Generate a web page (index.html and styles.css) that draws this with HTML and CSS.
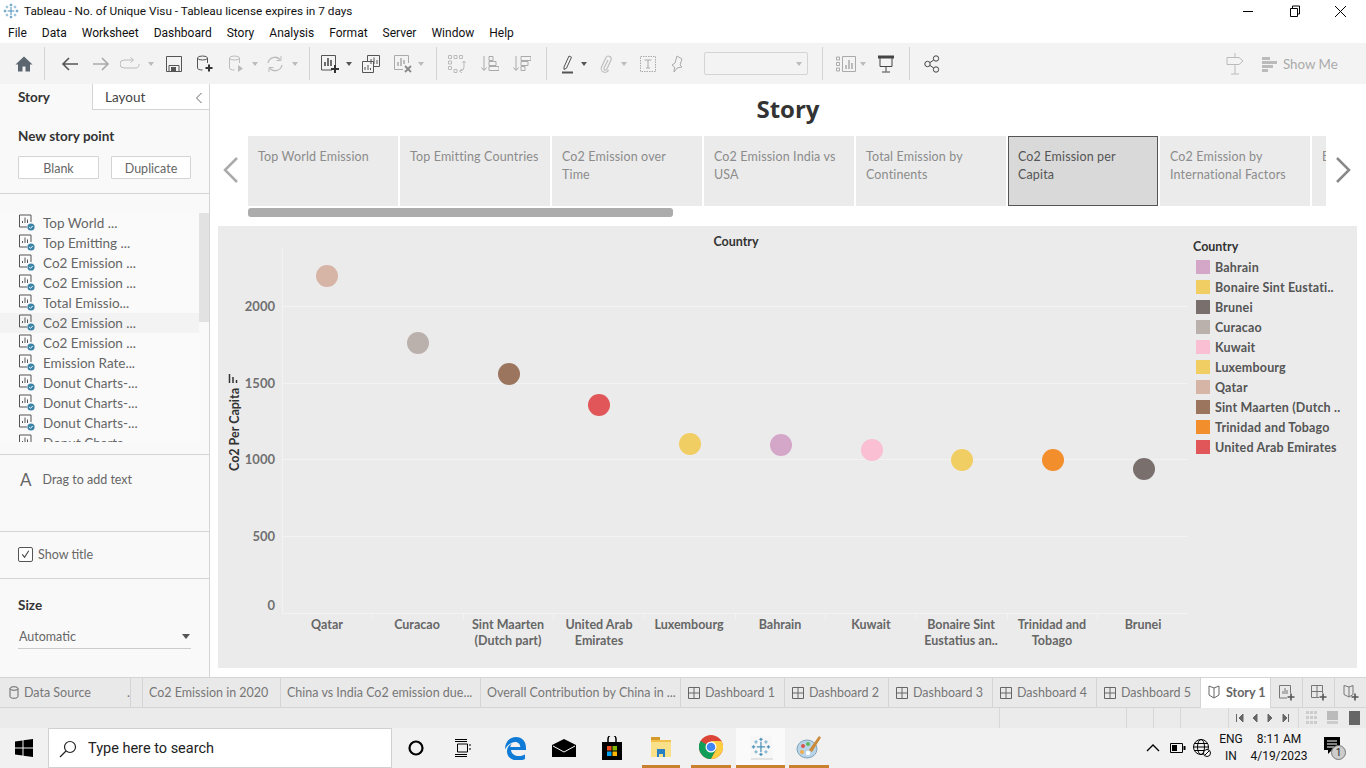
FILE: index.html
```html
<!DOCTYPE html>
<html lang="en">
<head>
  <meta charset="UTF-8">
  <title>Tableau - No. of Unique Visu - Tableau license expires in 7 days</title>
  <link rel="stylesheet" href="styles.css">
</head>
<body>

<svg class="defs" width="0" height="0">
  <symbol id="i-point" viewBox="0 0 18 18">
    <path d="M13 1H1.500v12H9" fill="none" stroke="#555" stroke-width="1"/>
    <path d="M13 1v7" fill="none" stroke="#555"/>
    <path d="M4.500 9V7M7 9V3.500M9.500 9V5.500" stroke="#555" stroke-width="1" fill="none"/>
    <circle cx="13" cy="13" r="3.600" fill="#3b84a8"/>
    <path d="M11.200 13l1.300 1.300 2.200-2.300" stroke="#fff" stroke-width="1" fill="none"/>
  </symbol>
  <symbol id="i-dash" viewBox="0 0 12 12">
    <path d="M.5.5h11v11H.5zM6 .5v11M.5 6h11" fill="none" stroke="#666"/>
  </symbol>
  <symbol id="i-snow" viewBox="0 0 24 24">
    <g fill="none" stroke="#4a90b8" stroke-width="1.500">
      <path d="M12 6v12M7 12h10"/>
      <path d="M12 1v4M10 3h4M12 19v4M10 21h4M1 12h4M3 10v4M19 12h4M21 10v4"/>
      <path d="M6 4v4M4 6h4M18 4v4M16 6h4M6 16v4M4 18h4M18 16v4M16 18h4" stroke="#7fb2cf"/>
    </g>
  </symbol>
</svg>

<div class="app">

  <div class="titlebar">
    <svg class="title-logo" width="16" height="16"><use href="#i-snow"/></svg>
    <span class="title-text">Tableau - No. of Unique Visu - Tableau license expires in 7 days</span>
    <div class="win-btns">
      <svg width="46" height="20" viewBox="0 0 46 20"><path d="M18 10.500h10" stroke="#000"/></svg>
      <svg width="46" height="20" viewBox="0 0 46 20"><path d="M19.500 7.500h7v8h-7zM21.500 7.500v-2.500h7v8h-2" fill="none" stroke="#000"/></svg>
      <svg width="46" height="20" viewBox="0 0 46 20"><path d="M18 5l11 11M29 5L18 16" stroke="#000" fill="none"/></svg>
    </div>
  </div>

  <div class="menubar">
    <span>File</span><span>Data</span><span>Worksheet</span><span>Dashboard</span><span>Story</span><span>Analysis</span><span>Format</span><span>Server</span><span>Window</span><span>Help</span>
  </div>

  <div class="toolbar">
    <span class="tool ml12"><svg width="18" height="16" viewBox="0 0 18 16"><path d="M9 .5L.5 8.500H3V15.500h4.500V10.500h3V15.500H15V8.500h2.500z" fill="#5b6670"/></svg></span>
    <i class="tb-div ml8"></i>
    <span class="tool ml13"><svg width="18" height="16" viewBox="0 0 18 16"><path d="M17 8H2M8 2L2 8l6 6" fill="none" stroke="#555" stroke-width="1.600"/></svg></span>
    <span class="tool ml7"><svg width="18" height="16" viewBox="0 0 18 16"><path d="M1 8h15M10 2l6 6-6 6" fill="none" stroke="#aaa" stroke-width="1.600"/></svg></span>
    <span class="tool ml5"><svg width="20" height="14" viewBox="0 0 20 14"><path d="M13 3H4a3.500 3.500 0 0 0 0 8h12a3.500 3.500 0 0 0 3-4M10.500.5L13.500 3l-3 2.500" fill="none" stroke="#bbb"/></svg></span>
    <i class="caret ml6"></i>
    <span class="tool ml6"><svg width="16" height="16" viewBox="0 0 16 16"><path d="M.5.5h15v15H.5z" fill="none" stroke="#555"/><path d="M3 9.500h10v6H3z" fill="none" stroke="#555"/><path d="M5 11h5v4.500H5z" fill="#555"/></svg></span>
    <span class="tool ml7"><svg width="18" height="18" viewBox="0 0 18 18"><ellipse cx="6.500" cy="3" rx="5" ry="2" fill="none" stroke="#555"/><path d="M1.500 3v10c0 1 1.500 2 5 2M11.500 3v5" fill="none" stroke="#555"/><path d="M13 9.500v7M9.500 13h7" stroke="#333" stroke-width="2"/></svg></span>
    <span class="tool ml8"><svg width="18" height="18" viewBox="0 0 18 18"><ellipse cx="6.500" cy="3" rx="5" ry="2" fill="none" stroke="#bbb"/><path d="M1.500 3v10c0 1 1.500 2 5 2M11.500 3v5" fill="none" stroke="#bbb"/><path d="M10 10l5 3.500-5 3.500z" fill="#bbb"/></svg></span>
    <i class="caret ml3"></i>
    <span class="tool ml3"><svg width="18" height="18" viewBox="0 0 18 18"><path d="M2 8a7 7 0 0 1 12-3.500M16 10a7 7 0 0 1-12 3.500" fill="none" stroke="#bbb" stroke-width="1.300"/><path d="M15 1v4.500h-4.500M3 17v-4.500h4.500" fill="none" stroke="#bbb"/></svg></span>
    <i class="caret ml5"></i>
    <i class="tb-div ml9"></i>
    <span class="tool ml8"><svg width="20" height="20" viewBox="0 0 20 20"><path d="M12 16H1.500V1.500h14V11" fill="none" stroke="#555"/><path d="M5 12V8M8 12V4M11 12V6" stroke="#444" stroke-width="1.500"/><path d="M15 11v8M11 15h8" stroke="#333" stroke-width="2"/></svg></span>
    <i class="caret caret-dark ml4"></i>
    <span class="tool ml5"><svg width="18" height="18" viewBox="0 0 18 18"><path d="M5.500 6V.5h12v11H12" fill="none" stroke="#555"/><path d="M.5 6.500h11v11H.5z" fill="none" stroke="#555"/><path d="M9 9V4M12 9V2.500M15 9V5M3 15v-3M6 15v-5M8.500 15v-2" stroke="#555"/></svg></span>
    <span class="tool ml8"><svg width="20" height="20" viewBox="0 0 20 20"><path d="M10 15.500H1.500V1.500h14V9" fill="none" stroke="#aaa"/><path d="M5 12V8M8 12V4M11 10V6" stroke="#aaa" stroke-width="1.500"/><path d="M12 12l6 6M18 12l-6 6" stroke="#888" stroke-width="1.800"/></svg></span>
    <i class="caret ml3"></i>
    <i class="tb-div ml10"></i>
    <span class="tool ml8"><svg width="18" height="18" viewBox="0 0 18 18"><path d="M.5.500h3v3h-3zM6 .5h3v3H6zM11.500.5h3v3h-3zM.5 6h3v3h-3zM.5 11.500h3v3h-3zM6 14.500h3v3H6z" fill="none" stroke="#bbb"/><path d="M16 6v6a4 4 0 0 1-4 4M14 14l-2.500 2 2.500 2M14.500 8L16 6l1.500 2" fill="none" stroke="#bbb"/></svg></span>
    <span class="tool ml9"><svg width="18" height="18" viewBox="0 0 18 18"><path d="M3 1v14M.5 12.500L3 15.500l2.500-3" fill="none" stroke="#aaa"/><path d="M8 1.500h4v4H8zM8 6.500h7v4H8zM8 11.500h10v4H8z" fill="none" stroke="#aaa"/></svg></span>
    <span class="tool ml8"><svg width="18" height="18" viewBox="0 0 18 18"><path d="M3 1v14M.5 12.500L3 15.500l2.500-3" fill="none" stroke="#aaa"/><path d="M8 1.500h10v4H8zM8 6.500h7v4H8zM8 11.500h4v4H8z" fill="none" stroke="#aaa"/></svg></span>
    <i class="tb-div ml12"></i>
    <span class="tool ml9"><svg width="16" height="20" viewBox="0 0 16 20"><path d="M4 13L9 2l2.500 1.200-5 11-2.500 1.300z" fill="none" stroke="#555"/><path d="M2 18.500h11" stroke="#555" stroke-width="2"/></svg></span>
    <i class="caret caret-dark ml1"></i>
    <span class="tool ml5"><svg width="14" height="20" viewBox="0 0 14 20"><path d="M9 6L5 14a1.500 1.500 0 0 0 2.800 1.200L12 6a2.800 2.800 0 0 0-5-2.500L2.500 13a3.800 3.800 0 0 0 7 3" fill="none" stroke="#bbb" stroke-width="1.100"/></svg></span>
    <i class="caret ml3"></i>
    <span class="tool ml7"><svg width="16" height="16" viewBox="0 0 16 16"><path d="M.5.5h15v15H.5z" fill="none" stroke="#aaa" stroke-dasharray="1.500 1"/><path d="M4.500 4h7M8 4v8M6 12h4" fill="none" stroke="#aaa"/></svg></span>
    <span class="tool ml5"><svg width="14" height="18" viewBox="0 0 14 18"><path d="M7 1l5 3-2 6 2 2-5 1-3 4 .5-5L2 10l3-2z" fill="none" stroke="#aaa"/></svg></span>
    <span class="tb-select ml15"><i class="caret"></i></span>
    <i class="tb-div ml14"></i>
    <span class="tool ml11"><svg width="20" height="16" viewBox="0 0 20 16"><path d="M.5 1h3v3h-3zM.5 6.500h3v3h-3zM.5 12h3v3h-3z" fill="none" stroke="#aaa"/><path d="M6.500.5h13v15h-13z" fill="none" stroke="#aaa"/><path d="M10 13V9M13 13V4M16 13V7" stroke="#aaa" stroke-width="1.500"/></svg></span>
    <i class="caret ml2"></i>
    <span class="tool ml6"><svg width="18" height="18" viewBox="0 0 18 18"><path d="M1 2h16" stroke="#444" stroke-width="3"/><path d="M3 2.500v9h12v-9M9 11.500v5M5 17h8" fill="none" stroke="#444"/></svg></span>
    <i class="tb-div ml11"></i>
    <span class="tool ml10"><svg width="16" height="18" viewBox="0 0 16 18"><circle cx="12" cy="3.500" r="2.700" fill="none" stroke="#444"/><circle cx="12" cy="14.500" r="2.700" fill="none" stroke="#444"/><circle cx="3.500" cy="9" r="2.700" fill="none" stroke="#444"/><path d="M6 7.500l3.700-2.500M6 10.500l3.700 2.500" stroke="#444"/></svg></span>
    <span class="tb-spacer"></span>
    <span class="tool"><svg width="18" height="22" viewBox="0 0 18 22"><path d="M9 0v4M1 4.500h12l4 3.500-4 3.500H1zM9 11.500V21M5 21h8" fill="none" stroke="#bbb"/></svg></span>
    <span class="show-me"><svg width="16" height="16" viewBox="0 0 16 16"><path d="M0 1h8v3H0zM0 5h15v3H0zM0 9h11v3H0zM0 13h6v3H0z" fill="#bbb"/></svg>Show Me</span>
  </div>

  <div class="main">
    <aside class="side">
      <div class="side-tabs">
        <div class="side-tab side-tab-on">Story</div>
        <div class="side-tab">Layout</div>
        <div class="side-collapse"><svg width="8" height="12" viewBox="0 0 8 12"><path d="M6.500 1L1.500 6l5 5" fill="none" stroke="#666"/></svg></div>
      </div>
      <div class="new-point">
        <div class="side-head">New story point</div>
        <div class="new-btns"><button class="btn">Blank</button><button class="btn">Duplicate</button></div>
      </div>
      <div class="points">
        <div class="points-list">
          <div class="point"><svg width="18" height="18"><use href="#i-point"/></svg>Top World ...</div>
          <div class="point"><svg width="18" height="18"><use href="#i-point"/></svg>Top Emitting ...</div>
          <div class="point"><svg width="18" height="18"><use href="#i-point"/></svg>Co2 Emission ...</div>
          <div class="point"><svg width="18" height="18"><use href="#i-point"/></svg>Co2 Emission ...</div>
          <div class="point"><svg width="18" height="18"><use href="#i-point"/></svg>Total Emissio...</div>
          <div class="point point-on"><svg width="18" height="18"><use href="#i-point"/></svg>Co2 Emission ...</div>
          <div class="point"><svg width="18" height="18"><use href="#i-point"/></svg>Co2 Emission ...</div>
          <div class="point"><svg width="18" height="18"><use href="#i-point"/></svg>Emission Rate...</div>
          <div class="point"><svg width="18" height="18"><use href="#i-point"/></svg>Donut Charts-...</div>
          <div class="point"><svg width="18" height="18"><use href="#i-point"/></svg>Donut Charts-...</div>
          <div class="point"><svg width="18" height="18"><use href="#i-point"/></svg>Donut Charts-...</div>
          <div class="point"><svg width="18" height="18"><use href="#i-point"/></svg>Donut Charts-...</div>
        </div>
        <div class="points-scroll"><div class="points-thumb"></div></div>
      </div>
      <div class="drag-text"><span class="drag-a">A</span>Drag to add text</div>
      <div class="show-title"><span class="check"><svg width="14" height="14" viewBox="0 0 14 14"><path d="M3.500 7.500l2.500 3 4.500-7" fill="none" stroke="#444" stroke-width="1.200"/></svg></span>Show title</div>
      <div class="size-box">
        <div class="side-head">Size</div>
        <div class="size-select">Automatic<i class="caret caret-dark"></i></div>
      </div>
    </aside>

    <section class="story">
      <h1 class="story-title">Story</h1>
      <div class="nav-row">
        <svg class="nav-arrow" width="18" height="28" viewBox="0 0 18 28"><path d="M15 2L3 14l12 12" fill="none" stroke="#aaa" stroke-width="2.500"/></svg>
        <div class="cards-wrap">
          <div class="cards">
            <div class="card">Top World Emission</div>
            <div class="card">Top Emitting Countries</div>
            <div class="card">Co2 Emission over Time</div>
            <div class="card">Co2 Emission India vs USA</div>
            <div class="card">Total Emission by Continents</div>
            <div class="card card-on">Co2 Emission per Capita</div>
            <div class="card">Co2 Emission by International Factors</div>
            <div class="card">Emission Rate Year</div>
          </div>
          <div class="cards-scroll"></div>
        </div>
        <svg class="nav-arrow" width="18" height="28" viewBox="0 0 18 28"><path d="M3 2l12 12L3 26" fill="none" stroke="#888" stroke-width="2.500"/></svg>
      </div>
      <div class="sheet">
        <svg class="chart" width="975" height="442" viewBox="218 226 975 442">
          <text class="hdr" x="736" y="246" text-anchor="middle">Country</text>
          <path class="axis" d="M282.500 247V613"/>
          <path class="grid" d="M282 306.500H1188M282 383.500H1188M282 459.500H1188M282 536.500H1188M282 613.500H1188"/>
          <path class="grid" d="M372.500 613v6M463.500 613v6M553.500 613v6M644.500 613v6M735.500 613v6M825.500 613v6M916.500 613v6M1007.500 613v6M1097.500 613v6"/>
          <text class="tick" x="275" y="311" text-anchor="end">2000</text>
          <text class="tick" x="275" y="388" text-anchor="end">1500</text>
          <text class="tick" x="275" y="464" text-anchor="end">1000</text>
          <text class="tick" x="275" y="541" text-anchor="end">500</text>
          <text class="tick" x="275" y="610" text-anchor="end">0</text>
          <text class="hdr" transform="translate(239 471) rotate(-90)">Co2 Per Capita</text>
          <path d="M229.500 374v9M233 377v6M236.500 380v3" stroke="#333" stroke-width="1.500"/>
          <circle cx="327" cy="276" r="11" fill="#d7b5a6"/>
          <circle cx="418" cy="343" r="11" fill="#bab0ac"/>
          <circle cx="509" cy="374" r="11" fill="#9c755f"/>
          <circle cx="599" cy="405" r="11" fill="#e15759"/>
          <circle cx="690" cy="444" r="11" fill="#f1ce63"/>
          <circle cx="781" cy="445" r="11" fill="#d4a6c8"/>
          <circle cx="872" cy="450" r="11" fill="#fabfd2"/>
          <circle cx="962" cy="460" r="11" fill="#f1ce63"/>
          <circle cx="1053" cy="460" r="11" fill="#f28e2b"/>
          <circle cx="1144" cy="469" r="11" fill="#79706e"/>
          <g class="xlab" text-anchor="middle">
            <text x="327" y="629">Qatar</text>
            <text x="417" y="629">Curacao</text>
            <text x="508" y="629">Sint Maarten</text><text x="508" y="645">(Dutch part)</text>
            <text x="599" y="629">United Arab</text><text x="599" y="645">Emirates</text>
            <text x="689" y="629">Luxembourg</text>
            <text x="780" y="629">Bahrain</text>
            <text x="871" y="629">Kuwait</text>
            <text x="961" y="629">Bonaire Sint</text><text x="961" y="645">Eustatius an..</text>
            <text x="1052" y="629">Trinidad and</text><text x="1052" y="645">Tobago</text>
            <text x="1143" y="629">Brunei</text>
          </g>
        </svg>
        <div class="legend">
          <div class="legend-title">Country</div>
          <div class="legend-row"><i class="swatch c-bahrain"></i>Bahrain</div>
          <div class="legend-row"><i class="swatch c-yellow"></i>Bonaire Sint Eustati..</div>
          <div class="legend-row"><i class="swatch c-brunei"></i>Brunei</div>
          <div class="legend-row"><i class="swatch c-curacao"></i>Curacao</div>
          <div class="legend-row"><i class="swatch c-kuwait"></i>Kuwait</div>
          <div class="legend-row"><i class="swatch c-yellow"></i>Luxembourg</div>
          <div class="legend-row"><i class="swatch c-qatar"></i>Qatar</div>
          <div class="legend-row"><i class="swatch c-sint"></i>Sint Maarten (Dutch ..</div>
          <div class="legend-row"><i class="swatch c-trinidad"></i>Trinidad and Tobago</div>
          <div class="legend-row"><i class="swatch c-uae"></i>United Arab Emirates</div>
        </div>
      </div>
    </section>
  </div>

  <div class="tabs">
    <div class="tab tab-ds"><svg width="10" height="13" viewBox="0 0 10 13"><ellipse cx="5" cy="2.500" rx="4" ry="1.800" fill="none" stroke="#666"/><path d="M1 2.500v8c0 1 1.500 1.800 4 1.800s4-.8 4-1.800v-8" fill="none" stroke="#666"/></svg>Data Source<span class="tab-dot">.</span></div>
    <div class="tab tab-gap"></div>
    <div class="tab tab-co2">Co2 Emission in 2020</div>
    <div class="tab tab-wide">China vs India Co2 emission due...</div>
    <div class="tab tab-wide">Overall Contribution by China in ...</div>
    <div class="tab tab-dash"><svg width="12" height="12"><use href="#i-dash"/></svg>Dashboard 1</div>
    <div class="tab tab-dash"><svg width="12" height="12"><use href="#i-dash"/></svg>Dashboard 2</div>
    <div class="tab tab-dash"><svg width="12" height="12"><use href="#i-dash"/></svg>Dashboard 3</div>
    <div class="tab tab-dash"><svg width="12" height="12"><use href="#i-dash"/></svg>Dashboard 4</div>
    <div class="tab tab-dash"><svg width="12" height="12"><use href="#i-dash"/></svg>Dashboard 5</div>
    <div class="tab tab-story"><svg width="14" height="14" viewBox="0 0 14 14"><path d="M7 3L2 1v9l5 3 5-3V1zM7 3v10" fill="none" stroke="#666"/></svg>Story 1</div>
    <div class="tab tab-add"><svg width="16" height="16" viewBox="0 0 16 16"><path d="M8 13H.5V.5h11V8" fill="none" stroke="#777"/><path d="M4 9V6M6 9V3M8 9V5" stroke="#777"/><path d="M12 8.500v7M8.500 12h7" stroke="#555" stroke-width="1.600"/></svg></div>
    <div class="tab tab-add"><svg width="16" height="16" viewBox="0 0 16 16"><path d="M8 12.500H.5V.5h11V8M6 .5v12M.5 6.500h11" fill="none" stroke="#777"/><path d="M12 8.500v7M8.500 12h7" stroke="#555" stroke-width="1.600"/></svg></div>
    <div class="tab tab-add"><svg width="16" height="16" viewBox="0 0 16 16"><path d="M6 2L1 .5v9L6 12l4-2.500V.5zM6 2v10" fill="none" stroke="#777"/><path d="M12 8.500v7M8.500 12h7" stroke="#555" stroke-width="1.600"/></svg></div>
  </div>

  <div class="statusbar">
    <i class="st-cell st-a"></i><i class="st-cell st-b"></i><i class="st-cell st-b"></i><i class="st-cell st-c"></i>
    <div class="st-nav">
      <svg width="62" height="10" viewBox="0 0 62 10"><path d="M1.500 1v8M8 1L4 5l4 4zM22 1l-4 4 4 4zM33 1l4 4-4 4zM48 1l4 4-4 4zM53.500 1v8" fill="#666" stroke="#666" stroke-width="1"/></svg>
    </div>
    <div class="st-views">
      <svg width="66" height="14" viewBox="0 0 66 14"><path d="M4 0h3v3H4zM8 0h3v3H8zM12 0h3v3h-3zM4 5h3v3H4zM8 5h3v3H8zM12 5h3v3h-3zM4 10h3v3H4zM8 10h3v3H8zM12 10h3v3h-3z" fill="#ccc"/><path d="M25 0h11v9H25z" fill="#bbb"/><path d="M25 10h11v3H25z" fill="#ccc"/><path d="M47 0h11v14H47z" fill="#666"/></svg>
    </div>
  </div>

  <div class="taskbar">
    <span class="tk tk-win"><svg width="18" height="18" viewBox="0 0 18 18"><path d="M0 2.500l7.500-1v7H0zM8.500 1.300L18 0v8.500H8.500zM0 9.500h7.500v7L0 15.500zM8.500 9.500H18V18l-9.500-1.300z" fill="#000"/></svg></span>
    <div class="search"><svg width="18" height="18" viewBox="0 0 18 18"><circle cx="11" cy="7" r="5.500" fill="none" stroke="#222" stroke-width="1.200"/><path d="M7 11l-6 6" stroke="#222" stroke-width="1.200"/></svg>Type here to search</div>
    <span class="tk tk-cortana"><svg width="16" height="16" viewBox="0 0 16 16"><circle cx="8" cy="8" r="6.500" fill="none" stroke="#000" stroke-width="2.200"/></svg></span>
    <span class="tk tk-view"><svg width="18" height="18" viewBox="0 0 18 18"><path d="M3.500 5h10v8h-10zM1 2.500h12M1 15.500h12M1 .5h12M1 17.500h12M16 5v2M16 9v2" fill="none" stroke="#000"/></svg></span>
    <span class="tk tk-edge"><svg width="24" height="24" viewBox="0 0 24 24"><path d="M2 13C2 6 7 1 13 1c6 0 10 4 10 11v2H8c.5 4 4 6 8 6 2.500 0 4.500-.7 6-1.500v4.500c-2 1-4 1.500-7 1.500-7 0-11-4-11-9 0-4 2-6.500 5-8-1 1-1.500 2-1.700 3.500h10c0-2.500-2-5-5-5-4 0-8 3-10 7z" fill="#0f7bd6"/></svg></span>
    <span class="tk tk-mail"><svg width="24" height="18" viewBox="0 0 24 18"><path d="M0 6L12 0l12 6v12H0z" fill="#000"/><path d="M1 7l11 6 11-6" fill="none" stroke="#fff"/></svg></span>
    <span class="tk tk-store"><svg width="22" height="24" viewBox="0 0 22 24"><path d="M1 6h20v18H1z" fill="#000"/><path d="M7 6V3a4 4 0 0 1 8 0v3" fill="none" stroke="#000" stroke-width="1.500"/><path d="M6 10h4.500v4.500H6z" fill="#f25022"/><path d="M11.500 10H16v4.500h-4.500z" fill="#7fba00"/><path d="M6 15.500h4.500V20H6z" fill="#00a4ef"/><path d="M11.500 15.500H16V20h-4.500z" fill="#ffb900"/></svg></span>
    <span class="tk tk-files tk-open"><svg width="22" height="22" viewBox="0 0 22 22"><path d="M1 1h9v3h11v17H1z" fill="#f3c04b"/><path d="M1 1h9v3H1z" fill="#d49a2a"/><path d="M1 6h20v15H1z" fill="#fbe08a"/><path d="M7 13h8v8h-2v-3H9v3H7z" fill="#2a7fc4"/></svg></span>
    <span class="tk tk-chrome tk-open"><svg width="24" height="24" viewBox="0 0 24 24"><circle cx="12" cy="12" r="12" fill="#db4437"/><path d="M12 12L1.600 6A12 12 0 0 0 12 24l5.500-10z" fill="#0f9d58"/><path d="M12 6h10.400A12 12 0 0 1 12 24l5.500-10z" fill="#ffcd40"/><circle cx="12" cy="12" r="5.500" fill="#fff"/><circle cx="12" cy="12" r="4.300" fill="#4285f4"/></svg></span>
    <span class="tk tk-tableau tk-open"><svg width="26" height="26" viewBox="0 0 26 26"><path d="M2 2h22l1 23H3z" fill="#f7f7f7"/><path d="M25 25H3" stroke="#ccc"/><g transform="translate(3 3) scale(.83)"><use href="#i-snow" width="24" height="24"/></g></svg></span>
    <span class="tk tk-paint tk-open"><svg width="26" height="26" viewBox="0 0 26 26"><ellipse cx="11" cy="15" rx="10" ry="9" fill="#b9d4e6" stroke="#7fa4bd"/><circle cx="7" cy="12" r="2" fill="#d9534f"/><circle cx="12" cy="10" r="2" fill="#5cb85c"/><circle cx="6" cy="18" r="2" fill="#f0ad4e"/><circle cx="12" cy="19" r="2.200" fill="#fff"/><path d="M13 16L23 2l2 1.500L16 18z" fill="#c98a3a"/></svg></span>
    <span class="tb-spacer"></span>
    <span class="tray tray-up"><svg width="14" height="8" viewBox="0 0 14 8"><path d="M1 7l6-6 6 6" fill="none" stroke="#000" stroke-width="1.300"/></svg></span>
    <span class="tray tray-bat"><svg width="16" height="10" viewBox="0 0 16 10"><path d="M.5.500h12v9H.5z" fill="none" stroke="#000"/><path d="M2 2h5v6H2z" fill="#000"/><path d="M13.500 3h2v4h-2z" fill="#000"/></svg></span>
    <span class="tray tray-net"><svg width="18" height="18" viewBox="0 0 18 18"><circle cx="8" cy="8" r="7.500" fill="none" stroke="#000"/><ellipse cx="8" cy="8" rx="3.500" ry="7.500" fill="none" stroke="#000"/><path d="M.5 8h15M1.500 4.500h13M1.500 11.500h13" stroke="#000"/><circle cx="14" cy="14" r="3.500" fill="#fff" stroke="#000"/><path d="M12 16l4-4" stroke="#000"/></svg></span>
    <span class="lang"><span>ENG</span><span>IN</span></span>
    <span class="clock"><span>8:11 AM</span><span>4/19/2023</span></span>
    <span class="notif"><svg width="18" height="18" viewBox="0 0 18 18"><path d="M1 1h16v13H9l-4 4v-4H1z" fill="#000"/><path d="M4 5h10M4 8h10M4 11h7" stroke="#fff"/></svg><span class="notif-badge">1</span></span>
  </div>

</div>

</body>
</html>
```

FILE: styles.css
```css
html, body {
  margin: 0;
  padding: 0;
}
body {
  font-family: Lato, "Open Sans", sans-serif;
  color: #555;
  background: #fff;
}
i {
  display: block;
}
.defs {
  position: absolute;
}
.app {
  width: 1366px;
  height: 768px;
  display: flex;
  flex-direction: column;
  overflow: hidden;
}

/* window chrome */
.titlebar {
  height: 22px;
  display: flex;
  align-items: center;
  padding-left: 3px;
  font-family: Roboto, sans-serif;
  font-size: 11.800px;
  color: #111;
}
.title-logo {
  margin-right: 5px;
}
.win-btns {
  margin-left: auto;
  display: flex;
  padding-right: 3px;
}
.menubar {
  height: 21px;
  display: flex;
  align-items: center;
  gap: 15px;
  padding-left: 8px;
  font-family: Roboto, sans-serif;
  font-size: 12px;
  color: #111;
}

/* toolbar */
.toolbar {
  height: 41px;
  background: #f3f3f3;
  display: flex;
  align-items: center;
}
.tool {
  width: 24px;
  height: 24px;
  flex: none;
  display: flex;
  align-items: center;
  justify-content: center;
}
.tb-div {
  width: 1px;
  height: 33px;
  background: #d4d4d4;
  flex: none;
}
.caret {
  width: 0;
  height: 0;
  box-sizing: content-box;
  border: 3px solid transparent;
  border-top: 4px solid #bbb;
  border-bottom: 0;
  margin-right: 2px;
  flex: none;
}
.caret-dark {
  border-top-color: #555;
}
.tb-select {
  width: 104px;
  height: 23px;
  box-sizing: border-box;
  border: 1px solid #d4d4d4;
  border-radius: 2px;
  display: flex;
  align-items: center;
  justify-content: flex-end;
  padding-right: 3px;
  flex: none;
}
.tb-spacer {
  flex: 1;
}
.show-me {
  display: flex;
  align-items: center;
  gap: 5px;
  width: 92px;
  margin-left: 15px;
  margin-right: 12px;
  font-size: 13.300px;
  color: #aaa;
}
.ml1 { margin-left: 1px; }
.ml2 { margin-left: 2px; }
.ml3 { margin-left: 3px; }
.ml4 { margin-left: 4px; }
.ml5 { margin-left: 5px; }
.ml6 { margin-left: 6px; }
.ml7 { margin-left: 7px; }
.ml8 { margin-left: 8px; }
.ml9 { margin-left: 9px; }
.ml10 { margin-left: 10px; }
.ml11 { margin-left: 11px; }
.ml12 { margin-left: 12px; }
.ml13 { margin-left: 13px; }
.ml14 { margin-left: 14px; }
.ml15 { margin-left: 15px; }

/* main */
.main {
  height: 593px;
  display: flex;
}
.side {
  width: 210px;
  flex: none;
  box-sizing: border-box;
  background: #f9f9f9;
  border-right: 1px solid #d4d4d4;
  display: flex;
  flex-direction: column;
}
.side-tabs {
  height: 26px;
  display: flex;
  flex: none;
}
.side-tab {
  width: 92px;
  box-sizing: border-box;
  padding-left: 18px;
  line-height: 26px;
  font-size: 13.500px;
  color: #444;
  border-left: 1px solid #d4d4d4;
  border-bottom: 1px solid #d4d4d4;
  background: #fff;
}
.side-tab:nth-child(2) {
  width: 117px;
  padding-left: 12px;
}
.side-tab-on {
  border: 0;
  background: #f9f9f9;
  font-weight: 700;
  color: #333;
}
.side-collapse {
  position: absolute;
  left: 195px;
  top: 88px;
}
.side-head {
  font-size: 13.500px;
  font-weight: 700;
  color: #333;
}
.new-point {
  height: 84px;
  box-sizing: border-box;
  padding: 18px 18px 0;
  border-bottom: 1px solid #d4d4d4;
  flex: none;
}
.new-btns {
  display: flex;
  gap: 12px;
  margin-top: 12px;
}
.btn {
  width: 81px;
  height: 23px;
  padding: 1px 0 0;
  border: 1px solid #d4d4d4;
  border-radius: 1px;
  background: #fff;
  font-family: inherit;
  font-size: 12.500px;
  color: #666;
}
.btn + .btn {
  width: 80px;
}
.points {
  height: 261px;
  box-sizing: border-box;
  padding-top: 19px;
  border-bottom: 1px solid #d4d4d4;
  flex: none;
  display: flex;
}
.points-list {
  width: 199px;
  height: 229px;
  overflow: hidden;
  background: #fafafa;
}
.point {
  height: 20px;
  display: flex;
  align-items: center;
  gap: 7px;
  padding-left: 18px;
  font-size: 13.500px;
  color: #666;
}
.point-on {
  background: #f3f3f3;
}
.points-scroll {
  width: 10px;
  height: 229px;
}
.points-thumb {
  height: 109px;
  background: #e2e2e2;
}
.drag-text {
  height: 77px;
  box-sizing: border-box;
  padding: 16px 0 0 20px;
  border-bottom: 1px solid #d4d4d4;
  display: flex;
  align-items: flex-start;
  gap: 11px;
  font-size: 12.500px;
  line-height: 18px;
  color: #666;
  flex: none;
}
.drag-a {
  font-size: 17px;
  color: #666;
}
.show-title {
  height: 47px;
  box-sizing: border-box;
  border-bottom: 1px solid #d4d4d4;
  padding: 0 0 2px 18px;
  display: flex;
  align-items: center;
  gap: 5px;
  font-size: 12.500px;
  color: #666;
  flex: none;
}
.check {
  width: 15px;
  height: 15px;
  box-sizing: border-box;
  border: 1px solid #555;
  border-radius: 2px;
  background: #fff;
  display: flex;
  align-items: center;
  justify-content: center;
}
.size-box {
  padding: 18px 18px 0;
}
.size-select {
  margin-top: 11px;
  height: 25px;
  box-sizing: border-box;
  border-bottom: 1px solid #ccc;
  padding: 0 1px;
  display: flex;
  align-items: center;
  justify-content: space-between;
  font-size: 12.500px;
  color: #666;
}
.size-select .caret {
  border-width: 5px 4px 0;
  margin-right: 0;
}

/* story */
.story {
  flex: 1;
  min-width: 0;
  display: flex;
  flex-direction: column;
}
.story-title {
  margin: 0;
  height: 52px;
  line-height: 50px;
  text-align: center;
  font-size: 24px;
  font-weight: 700;
  color: #333;
  font-family: "Open Sans", sans-serif;
}
.nav-row {
  height: 90px;
  display: flex;
  align-items: flex-start;
  flex: none;
}
.nav-arrow {
  flex: none;
  margin: 20px 12px 0;
}
.cards-wrap {
  width: 1078px;
  flex: none;
  overflow: hidden;
  margin-left: -4px;
  margin-right: -4px;
}
.cards {
  display: flex;
  gap: 2px;
  width: 1400px;
}
.card {
  width: 150px;
  height: 70px;
  box-sizing: border-box;
  flex: none;
  background: #ebebeb;
  padding: 12px 10px 0;
  font-size: 12.500px;
  line-height: 18px;
  letter-spacing: .15px;
  color: #8c8c8c;
}
.card-on {
  background: #d9d9d9;
  border: 1px solid #555;
  padding: 11px 9px 0;
  color: #555;
}
.cards-scroll {
  width: 425px;
  height: 9px;
  margin-top: 2px;
  border-radius: 3px;
  background: #acacac;
}
.sheet {
  margin-left: 8px;
  width: 1139px;
  height: 442px;
  background: #ebebeb;
  display: flex;
  flex: none;
}
.chart {
  flex: none;
  display: block;
}
.chart .hdr {
  font-size: 12.500px;
  font-weight: 700;
  fill: #333;
}
.chart .axis {
  stroke: #f3f3f3;
}
.chart .grid {
  stroke: #f3f3f3;
  fill: none;
}
.chart .tick {
  font-size: 13px;
  font-weight: 700;
  fill: #707070;
}
.chart .xlab {
  font-size: 12.500px;
  font-weight: 700;
  fill: #666;
}
.legend {
  padding-top: 13px;
  min-width: 0;
  white-space: nowrap;
}
.legend-title {
  font-size: 12.500px;
  font-weight: 700;
  color: #333;
  height: 18px;
  line-height: 15px;
}
.legend-row {
  height: 20px;
  display: flex;
  align-items: center;
  gap: 5px;
  padding-left: 3px;
  font-size: 12.500px;
  letter-spacing: .17px;
  font-weight: 700;
  color: #555;
}
.swatch {
  width: 14px;
  height: 14px;
  flex: none;
}
.c-bahrain { background: #d4a6c8; }
.c-yellow { background: #f1ce63; }
.c-brunei { background: #79706e; }
.c-curacao { background: #bab0ac; }
.c-kuwait { background: #fabfd2; }
.c-qatar { background: #d7b5a6; }
.c-sint { background: #9c755f; }
.c-trinidad { background: #f28e2b; }
.c-uae { background: #e15759; }

/* sheet tabs */
.tabs {
  height: 31px;
  display: flex;
  box-sizing: border-box;
  background: #e9e9e9;
  border-top: 1px solid #d4d4d4;
  border-bottom: 1px solid #d4d4d4;
  flex: none;
}
.tab {
  box-sizing: border-box;
  flex: none;
  height: 100%;
  border-right: 1px solid #d4d4d4;
  display: flex;
  align-items: center;
  gap: 5px;
  font-size: 12.500px;
  color: #777;
  white-space: nowrap;
}
.tab-ds {
  width: 131px;
  padding-left: 9px;
}
.tab-dot {
  margin-left: 31px;
}
.tab-gap {
  width: 12px;
}
.tab-co2 {
  width: 138px;
  padding-left: 6px;
}
.tab-wide {
  width: 200px;
  padding-left: 6px;
}
.tab-dash {
  width: 104px;
  padding-left: 7px;
}
.tab-story {
  width: 70px;
  padding-left: 6px;
  background: #fff;
  font-weight: 700;
  color: #666;
  height: 30px;
  padding-bottom: 2px;
}
.tab-add {
  width: 32px;
  justify-content: center;
}

.statusbar {
  height: 20px;
  background: #ebebeb;
  display: flex;
  flex: none;
}
.st-cell {
  box-sizing: border-box;
  height: 100%;
  border-left: 1px solid #d8d8d8;
  flex: none;
}
.st-a {
  width: 127px;
  margin-left: 999px;
}
.st-b {
  width: 27px;
}
.st-c {
  width: 48px;
}
.st-nav {
  width: 70px;
  box-sizing: border-box;
  border-left: 1px solid #d8d8d8;
  padding-left: 6px;
  display: flex;
  align-items: center;
  flex: none;
}
.st-views {
  flex: 1;
  border-left: 1px solid #d8d8d8;
  display: flex;
  align-items: center;
  padding-left: 3px;
}

/* taskbar */
.taskbar {
  height: 40px;
  background: #f1f1f1;
  display: flex;
  align-items: center;
  flex: none;
  font-family: Roboto, sans-serif;
  color: #111;
}
.tk {
  flex: none;
  height: 40px;
  display: flex;
  align-items: center;
  justify-content: center;
  box-sizing: border-box;
}
.tk-open {
  border-bottom: 3px solid #c9812f;
}
.tk-win { width: 48px; }
.search {
  width: 344px;
  height: 40px;
  box-sizing: border-box;
  border: 1px solid #d0d0d0;
  background: #fff;
  display: flex;
  align-items: center;
  gap: 11px;
  padding: 1px 0 0 10px;
  font-size: 14.500px;
  color: #222;
  flex: none;
}
.tk-cortana { width: 48px; }
.tk-view { width: 46px; }
.tk-edge { width: 58px; }
.tk-mail { width: 40px; }
.tk-store { width: 40px; margin-left: 8px; }
.tk-files { width: 38px; margin-left: 10px; }
.tk-chrome { width: 40px; margin-left: 11px; }
.tk-tableau { width: 49px; margin-left: 5px; background: #fafafa; }
.tk-paint { width: 40px; margin-left: 4px; }
.tray {
  flex: none;
  display: flex;
  align-items: center;
}
.tray-up { margin-right: 10px; }
.tray-bat { margin-right: 7px; }
.lang, .clock {
  display: flex;
  flex-direction: column;
  align-items: center;
  font-size: 12px;
  line-height: 17px;
}
.lang {
  width: 30px;
  margin-left: 5px;
}
.clock {
  width: 64px;
  margin-left: 1px;
}
.notif {
  width: 24px;
  height: 24px;
  margin-left: 12px;
  margin-right: 19px;
  position: relative;
}
.notif-badge {
  position: absolute;
  left: 8px;
  top: 9px;
  width: 15px;
  height: 15px;
  box-sizing: border-box;
  border: 1px solid #777;
  border-radius: 50%;
  background: #ccc;
  font-size: 10px;
  line-height: 13px;
  text-align: center;
  color: #222;
}
```
